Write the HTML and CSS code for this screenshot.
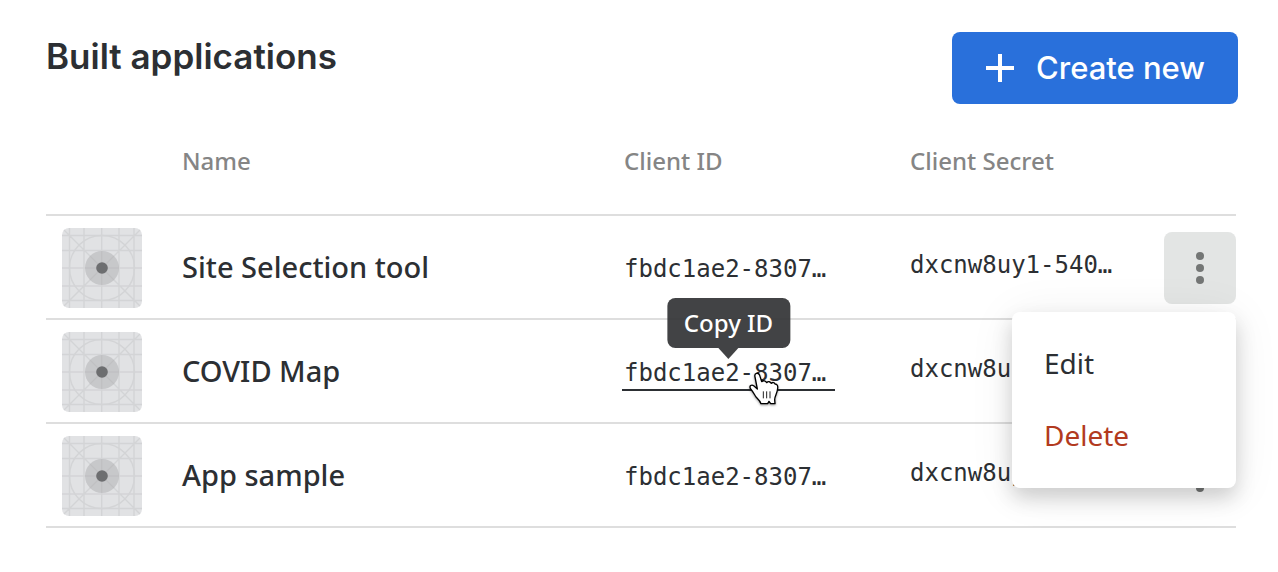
FILE: index.html
```html
<!DOCTYPE html>
<html lang="en">
<head>
<meta charset="utf-8">
<meta name="viewport" content="width=device-width, initial-scale=1">
<title>Built applications</title>
<link rel="stylesheet" href="styles.css">
</head>
<body>
<svg class="sprite" aria-hidden="true">
  <symbol id="app-icon" viewBox="0 0 80 80">
    <rect width="80" height="80" rx="7" fill="#e1e2e4"/>
    <g fill="none" stroke="#d3d4d6" stroke-width="1.4">
      <path d="M7.5 0V80M22 0V80M39.7 0V80M57 0V80M72 0V80M0 7.5H80M0 22.5H80M0 40H80M0 58H80M0 72.5H80M2 2 78 78M78 2 2 78"/>
      <circle cx="40" cy="40" r="32.5"/>
    </g>
    <circle cx="40" cy="40" r="17" fill="#a8a9ab" fill-opacity=".45"/>
    <circle cx="40" cy="40" r="5.8" fill="#6d6e70"/>
  </symbol>
  <symbol id="dots" viewBox="0 0 32 32">
    <circle cx="16" cy="4" r="4"/><circle cx="16" cy="16" r="4"/><circle cx="16" cy="28" r="4"/>
  </symbol>
</svg>
<main class="page">
  <header class="page-header">
    <h1 class="title">Built applications</h1>
    <button class="create" type="button">
      <svg class="plus" viewBox="0 0 28 28" aria-hidden="true"><path d="M14 0V28M0 14H28" stroke="currentColor" stroke-width="4"/></svg>
      Create new
    </button>
  </header>
  <table class="apps">
    <colgroup><col class="col-icon"><col><col class="col-id"><col class="col-secret"><col class="col-actions"></colgroup>
    <thead>
      <tr><th></th><th scope="col">Name</th><th scope="col">Client ID</th><th scope="col">Client Secret</th><th></th></tr>
    </thead>
    <tbody>
      <tr>
        <td><svg class="app-icon" aria-hidden="true"><use href="#app-icon"/></svg></td>
        <td class="name">Site Selection tool</td>
        <td><button class="code" type="button">fbdc1ae2-8307…</button></td>
        <td class="secret"><button class="code" type="button">dxcnw8uy1-540…</button></td>
        <td class="actions">
          <button class="more is-open" type="button" aria-label="More actions"><svg class="dots" aria-hidden="true"><use href="#dots"/></svg></button>
          <div class="menu">
            <button class="menu-item" type="button">Edit</button>
            <button class="menu-item danger" type="button">Delete</button>
          </div>
        </td>
      </tr>
      <tr>
        <td><svg class="app-icon" aria-hidden="true"><use href="#app-icon"/></svg></td>
        <td class="name">COVID Map</td>
        <td>
          <button class="code is-hovered" type="button">fbdc1ae2-8307…<span class="tooltip">Copy ID</span>
            <svg class="pointer" viewBox="24 30 96 108" aria-hidden="true">
              <path d="M45 48C42 36 55 33 59 43L65 62C70 57 77 59 80 65C85 60 91 62 94 67C98 63 103 64 105 69C112 69 114 75 113 82C112 99 104 103 104 116L105 128H92L87 121L83 128H63C60 119 54 114 48 108C43 100 39 92 32 84C26 74 35 69 42 75L52 84Z" fill="#fff" stroke="#000" stroke-width="4" stroke-linejoin="round"/>
              <path d="M70 91V112M80 91V112M90 91V112" stroke="#222" stroke-width="3"/>
            </svg>
          </button>
        </td>
        <td class="secret"><button class="code" type="button">dxcnw8uy1-540…</button></td>
        <td class="actions"><button class="more" type="button" aria-label="More actions"><svg class="dots" aria-hidden="true"><use href="#dots"/></svg></button></td>
      </tr>
      <tr>
        <td><svg class="app-icon" aria-hidden="true"><use href="#app-icon"/></svg></td>
        <td class="name">App sample</td>
        <td><button class="code" type="button">fbdc1ae2-8307…</button></td>
        <td class="secret"><button class="code" type="button">dxcnw8uy1-540…</button></td>
        <td class="actions"><button class="more" type="button" aria-label="More actions"><svg class="dots" aria-hidden="true"><use href="#dots"/></svg></button></td>
      </tr>
    </tbody>
  </table>
</main>
</body>
</html>
```

FILE: styles.css
```css
* { box-sizing: border-box; }

body {
  margin: 0;
  background: #fff;
  color: #2c2f33;
  font-family: "Noto Sans", sans-serif;
}

button {
  border: 0;
  background: none;
  color: inherit;
  font: inherit;
  cursor: pointer;
}

.sprite { position: absolute; width: 0; height: 0; }

.page { padding: 32px 40px 44px 46px; }

.page-header {
  display: flex;
  align-items: flex-start;
  justify-content: space-between;
}

.title {
  margin: 0;
  padding-top: 4px;
  font: 600 35px/40px Inter, sans-serif;
}

.create {
  display: flex;
  align-items: center;
  gap: 22px;
  min-width: 286px;
  height: 72px;
  padding: 0 32px 0 34px;
  border-radius: 8px;
  background: #2970db;
  color: #fff;
  font: 500 31px/40px Inter, sans-serif;
  white-space: nowrap;
}

.plus { width: 28px; height: 28px; flex: none; }

.apps {
  width: calc(100% - 2px);
  border-collapse: separate;
  border-spacing: 0;
  table-layout: fixed;
}

.col-icon { width: 120px; }
.col-id { width: 286px; }
.col-secret { width: 270px; }
.col-actions { width: 72px; }

th, td {
  padding: 2px 0 0 16px;
  border-bottom: 2px solid #dedede;
  text-align: left;
  vertical-align: middle;
}

th {
  height: 112px;
  padding-top: 4px;
  color: #858585;
  font-size: 24px;
  line-height: 32px;
  font-weight: 500;
}

td { height: 104px; }

.app-icon { display: block; width: 80px; height: 80px; }

.name {
  padding-top: 0;
  font-size: 29px;
  line-height: 40px;
  font-weight: 500;
}

.code {
  position: relative;
  min-width: 213px;
  margin-left: -2px;
  padding: 4px 2px 0;
  border-bottom: 2px solid transparent;
  font: 24px/32px "DejaVu Sans Mono", monospace;
  text-align: left;
  white-space: nowrap;
}

.code.is-hovered { border-color: #2c2f33; }

.secret { padding-bottom: 8px; }

.tooltip {
  position: absolute;
  bottom: 41px;
  left: 50%;
  z-index: 1;
  padding: 9px 17px;
  border-radius: 8px;
  background: rgba(52, 53, 55, .93);
  color: #fff;
  font: 500 24px/32px "Noto Sans", sans-serif;
  transform: translateX(-50%);
}

.tooltip::after {
  content: "";
  position: absolute;
  top: 100%;
  left: 50%;
  margin-left: -10px;
  border: 10px solid transparent;
  border-top: 11px solid rgba(52, 53, 55, .93);
  border-bottom: 0;
}

.pointer {
  position: absolute;
  top: 18px;
  left: 126px;
  width: 32px;
  height: 36px;
  filter: drop-shadow(0 1px 1px rgba(0, 0, 0, .4));
}

.actions { position: relative; padding: 2px 0 0; }

.more {
  display: grid;
  place-items: center;
  width: 72px;
  height: 72px;
  padding: 0;
  border-radius: 8px;
}

.more.is-open { background: #e3e5e4; }

.dots { width: 32px; height: 32px; fill: #747675; }

.menu {
  position: absolute;
  top: 96px;
  right: 0;
  z-index: 2;
  width: 224px;
  padding: 15px 0 17px;
  border-radius: 8px;
  background: #fff;
  box-shadow: 0 10px 20px rgba(0, 0, 0, .17), 0 4px 48px rgba(0, 0, 0, .07);
}

.menu-item {
  display: block;
  width: 100%;
  height: 72px;
  padding: 0 32px;
  font-size: 28px;
  line-height: 40px;
  text-align: left;
}

.danger { color: #b23a20; }
```
